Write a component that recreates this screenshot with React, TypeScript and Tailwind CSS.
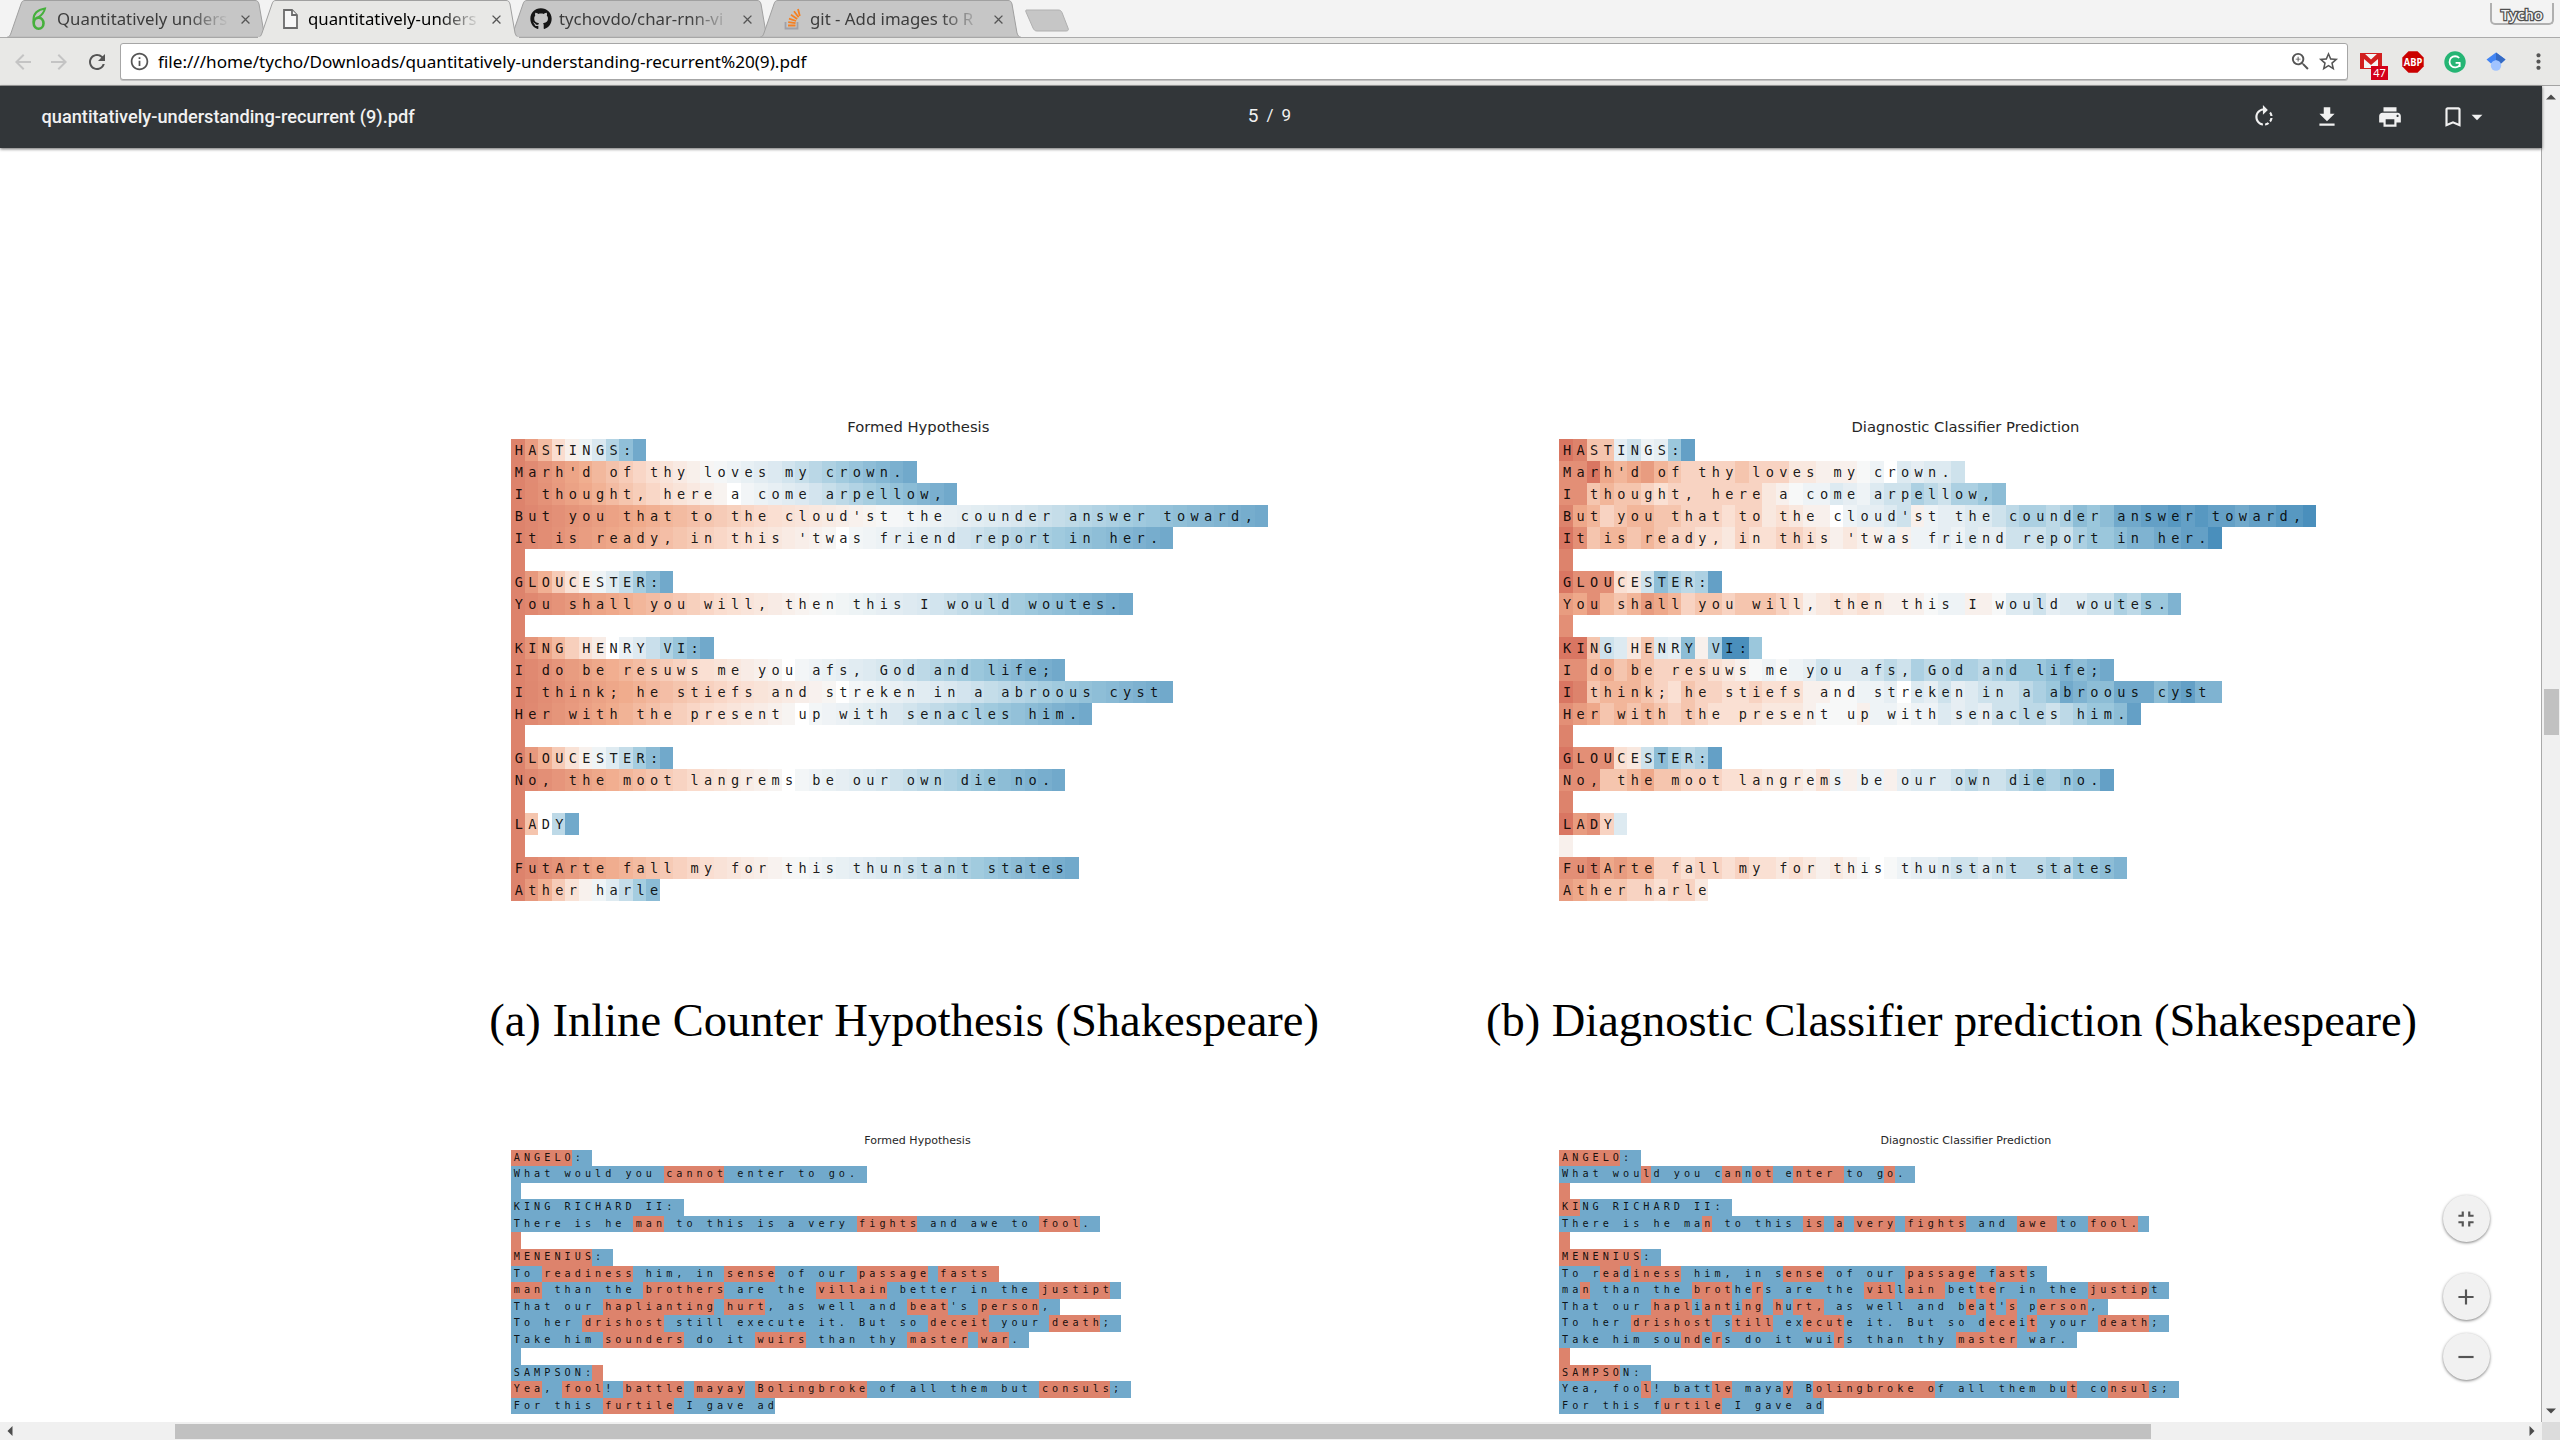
import React from "react";
import {
  MdRotateRight, MdFileDownload, MdPrint, MdBookmarkBorder, MdArrowDropDown, MdFullscreenExit,
  MdAdd, MdRemove, MdZoomIn, MdStarBorder, MdMoreVert, MdInfoOutline, MdRefresh, MdClose,
  MdArrowBack, MdArrowForward,
} from "react-icons/md";
import { FaGithub } from "react-icons/fa";

/* ---------- diverging colour scale ---------- */

const STOPS: [number, number, number][] = [
  [176, 50, 60], [206, 88, 74], [221, 131, 108], [240, 172, 141], [250, 221, 207], [247, 248, 248],
  [218, 232, 240], [160, 202, 222], [113, 169, 203], [70, 140, 186], [40, 90, 150],
];

function scale(v: number): string {
  const p = Math.max(0, Math.min(9.999, v * 10));
  const i = Math.floor(p);
  const f = p - i;
  const c = STOPS[i].map((a, k) => Math.round(a + (STOPS[i + 1][k] - a) * f));
  return `rgb(${c[0]},${c[1]},${c[2]})`;
}

const level = (ch: string) => (ch === "_" ? "#fff" : scale(0.14 + (ch.charCodeAt(0) - 97) * 0.03));

type Row = { text: string; colors: string[] };

/* Every line ends in one extra cell for its newline, except the last one. */
const VERSE = [
  "HASTINGS:", "Marh'd of thy loves my crown.", "I thought, here a come arpellow,",
  "But you that to the cloud'st the counder answer toward,",
  "It is ready, in this 'twas friend report in her.", "", "GLOUCESTER:",
  "You shall you will, then this I would woutes.", "", "KING HENRY VI:",
  "I do be resuws me you afs, God and life;", "I think; he stiefs and streken in a abroous cyst",
  "Her with the present up with senacles him.", "", "GLOUCESTER:",
  "No, the moot langrems be our own die no.", "", "LADY", "",
  "FutArte fall my for this thunstant states", "Ather harle",
];

const counterRows: Row[] = VERSE.map((line, r) => {
  const last = r === VERSE.length - 1;
  const text = last ? line : line + " ";
  const den = line.length;
  return {
    text,
    colors: text.split("").map((_, i) =>
      den && i * 2 === den ? "#fff" : scale(0.2 + 0.6 * (den ? i / den : 0))),
  };
});

const CLASSIFIER = [
  "bchhoqnotx",
  "ddbfgfeghiiiihiiikklllmn_poppq",
  "ddhghhijiiiiiiiklmnnponpqqsrqsstu",
  "cfgihgghhiiijiikjkll_noopqlnooppqrssrsutuwwxxyxyxxwxxyyz",
  "bdhgghghiijjkijjiijklkllnlnnonpooqqqrqsttuvvwwxxz",
  "c",
  "bdddjkqusrsx",
  "efdghgefgihhihhhijlkjkjklllmnnllmppqoppqqsrttv",
  "d",
  "bbhqpkhpoulszzt",
  "ddgfhghiiiijklmnmnoqpppqrqsrrssrstttuvuvwy",
  "bchggghijhiijjijjjllmmnno_poqopqqqrstwvuuwwwuwxvv",
  "defhghghihijjjjkkklmmmlnnmnnpopoqqrrqrsttux",
  "c",
  "bdddjkqusrsx",
  "dddhhgfhhiiijjjkkkljnlnnlopppqrqqrststuux",
  "c",
  "bedip",
  "l",
  "ddcfeffiijiijijjkjklklm_mnoopqqpqrrrsrttuv",
  "efghhiijiik",
];

const classifierRows: Row[] = counterRows.map((row, r) => ({
  text: row.text,
  colors: CLASSIFIER[r].split("").map(level),
}));

/* Binary plots: square brackets enclose the red runs, "~" is the newline cell. */
const RED = "#dd836c";
const BLUE = "#71a9cb";

function marked(src: string): Row {
  let red = false;
  let text = "";
  const colors: string[] = [];
  for (const ch of src) {
    if (ch === "[") red = true;
    else if (ch === "]") red = false;
    else {
      text += ch === "~" ? " " : ch;
      colors.push(red ? RED : BLUE);
    }
  }
  return { text, colors };
}

const nounRows = [
  "[ANGELO]:~", "What would you [cannot] enter to go.~", "~", "KING RICHARD II:~",
  "There is he [man] to this is a very [fights] and awe to [fool].~", "[~]", "[MENENIUS]:~",
  "To [readiness] him, in [sense] of our [passage] [fasts~]",
  "[man] than the [brothers] are the [villain] better in the [justipt]~",
  "That our [haplianting] [hurt], as well and [beat]'s [person],~",
  "To her [drishost] still execute it. But so [deceit] your [death];~",
  "Take him [sounders] do it [wuirs] than thy [master] [war].~", "~", "SAMPSON:[~]",
  "[Yea], [fool]! [battle] [mayay] [Bolingbroke] of all them but [consuls];~",
  "For this [furtile] I gave ad",
].map(marked);

const nounPredictedRows = [
  "[ANGELO]:~", "What wou[l]d you c[an]n[ot] e[nter ]to g[o].~", "[~]", "[KI]NG RICHARD II:~",
  "There is he ma[n] to this [is] [a] [very] [fights] and [awe ]to [fool.]~", "[~]", "[MENENIUS]:~",
  "To r[ea]d[iness] him, in s[ense] of our [passage] f[ast]s~",
  "ma[n] than the [brot]he[r]s are the [vil]l[ain ]bet[te]r in the [justip]t~",
  "That our [hapl]i[ant]i[ng] [h]u[rt,] as well and b[e]a[t]'[s] p[erson],~",
  "To her [drishost] s[till] ex[ecut]e it. But so d[ece]i[t] your [death];~",
  "Take him sou[nd]e[r]s do it wui[r]s than thy [master] war.~", "[~]", "[SAMPSO]N:~",
  "Yea, foo[l]! batt[le] maya[y] B[olingbroke o]f all them bu[t] co[nsul]s;~",
  "For this f[urtile] I gave ad",
].map(marked);

/* ---------- plots ---------- */

function Plot({ rows, small }: { rows: Row[]; small?: boolean }) {
  const rowCls = small
    ? "flex h-[16.56px] text-[10.2px] leading-[16.4px]"
    : "flex h-[22.03px] text-[13.6px] leading-[23px]";
  const cellCls = small
    ? "block w-[10.157px] shrink-0 whitespace-pre pl-[2.6px] text-black/90"
    : "block w-[13.53px] shrink-0 whitespace-pre pl-[3.6px] text-black/90";
  return (
    <div className="font-['DejaVu_Sans_Mono',monospace]">
      {rows.map((row, r) => (
        <div key={r} className={rowCls}>
          {row.text.split("").map((ch, i) => (
            <span key={i} className={cellCls} style={{ backgroundColor: row.colors[i] }}>{ch}</span>
          ))}
        </div>
      ))}
    </div>
  );
}

/* ---------- browser chrome ---------- */

function Tab({ title, icon, active, first }: { title: string; icon: React.ReactNode; active?: boolean; first?: boolean }) {
  return (
    <div className={`relative h-[38px] w-[261px] shrink-0 ${first ? "" : "-ml-[10px]"} ${active ? "z-10" : ""}`}>
      <svg className="absolute inset-0" width="261" height="38" viewBox="0 0 261 38">
        <path d="M0 37.5 C2 37 3 36 4 33 L14 4 C15 1 16 .5 18 .5 H248 C250 .5 251 1 252 4 L257 33 C258 36 259 37 261 37.5"
          fill={active ? "#e8e8e6" : "#c6c6c6"} stroke="#a0a0a0" strokeWidth="1" />
        <path d="M0 37.5H261" stroke={active ? "#e8e8e6" : "#a7a7a7"} strokeWidth="1.5" />
      </svg>
      <div className="relative flex h-[38px] items-center pl-[21px]">
        <div className="flex w-[22px] justify-center">{icon}</div>
        <div className={`ml-[7px] w-[176px] whitespace-nowrap text-[16.8px] [mask-image:linear-gradient(to_right,black_74%,transparent_98%)] ${active ? "text-black" : "text-[#3c3c3c]"}`}>{title}</div>
        <MdClose className="ml-[5px] text-[#555]" size={15} />
      </div>
    </div>
  );
}

const OverleafMark = () => (
  <svg width="16" height="24" viewBox="0 0 16 24" fill="none" stroke="#46b03c" strokeWidth="2.6">
    <ellipse cx="7.6" cy="16.2" rx="4.9" ry="5.6" />
    <path d="M2.7 15.500C1.500 8 5 3 14 1.500C12.500 8 9 9 5.500 11.500" strokeWidth="2" />
  </svg>
);

const PageMark = () => (
  <svg width="15" height="20" viewBox="0 0 15 20" fill="#f7f7f7" stroke="#6b6b6b" strokeWidth="1.8">
    <path d="M1 1H9L14 6V19H1Z" /><path d="M9 1V6H14" />
  </svg>
);

const StackMark = () => (
  <svg width="17" height="22" viewBox="0 0 17 22" fill="none" strokeWidth="1.8">
    <path d="M1.5 14V20.5H13.5V14" stroke="#a0a0a8" />
    <path d="M4 17.5H11.5M4.2 14.2L11.6 15.2M5 10.6L12.1 13M7 6.8L13.2 11M10 3.2L14.6 9.2M14 1L15.8 8" stroke="#f48024" />
  </svg>
);

const GmailMark = () => (
  <div className="relative h-[18px] w-[22px]">
    <svg width="22" height="18" viewBox="0 0 22 18">
      <rect x=".5" y=".5" width="21" height="15" fill="#f4f4f4" stroke="#d21f1f" />
      <path d="M0 0H4L11 6.5L18 0H22V16H18V6L11 12L4 6V16H0Z" fill="#d21f1f" />
    </svg>
    <span className="absolute left-[11px] top-[13px] h-[14px] w-[17px] bg-[#d4001a] text-center text-[11px] leading-[14px] text-white">47</span>
  </div>
);

const AbpMark = () => (
  <svg width="22" height="22" viewBox="0 0 22 22">
    <path d="M6.5 .3H15.5L21.700 6.500V15.500L15.500 21.700H6.500L.3 15.500V6.500Z" fill="#cb0000" />
    <text x="11" y="14.700" textAnchor="middle" textLength="18.500" lengthAdjust="spacingAndGlyphs" className="fill-white font-['Open_Sans',sans-serif] text-[10.500px] font-bold">ABP</text>
  </svg>
);

const GrammarlyMark = () => (
  <svg width="22" height="22" viewBox="0 0 22 22" fill="none">
    <circle cx="11" cy="11" r="10.7" fill="#25b574" />
    <path d="M15.2 7A5.6 5.6 0 1 0 15.6 14.2V11.8H11.6M15.7 11.9V16" stroke="#fff" strokeWidth="1.8" />
  </svg>
);

const ScholarMark = () => (
  <svg width="20" height="20" viewBox="0 0 20 20">
    <path d="M10 .5L19.5 7.5L15 11.5L10 8.5L5 11.5L.5 7.5Z" fill="#4285f4" />
    <path d="M10 .5L19.5 7.5L14.5 12L10 8Z" fill="#356ac3" />
    <circle cx="10" cy="13.500" r="5.200" fill="#a0c3ff" />
  </svg>
);

const Triangle = ({ dir }: { dir: "up" | "down" | "left" | "right" }) => (
  <svg width="10" height="10" viewBox="0 0 10 10" fill="#4c4c4c">
    {dir === "up" && <path d="M0 7.5L5 2.5L10 7.5Z" />}
    {dir === "down" && <path d="M0 2.5L5 7.5L10 2.5Z" />}
    {dir === "left" && <path d="M7.5 0L2.5 5L7.5 10Z" />}
    {dir === "right" && <path d="M2.5 0L7.5 5L2.5 10Z" />}
  </svg>
);

const fab =
  "flex h-[47px] w-[47px] items-center justify-center rounded-full bg-[#f1f1f1] text-[#555] shadow-[0_1px_3px_rgba(0,0,0,0.5)]";

export default function App() {
  return (
    <div className="flex h-[1440px] w-[2560px] flex-col overflow-hidden bg-white font-['Noto_Sans',sans-serif]">
      {/* tab strip */}
      <div className="flex h-[38px] shrink-0 border-b border-[#ababab] bg-[#f3f3f3] pl-[7px]">
        <Tab first title="Quantitatively unders" icon={<OverleafMark />} />
        <Tab active title="quantitatively-unders" icon={<PageMark />} />
        <Tab title="tychovdo/char-rnn-vi" icon={<FaGithub size={22} color="#161616" />} />
        <Tab title="git - Add images to R" icon={<StackMark />} />
        <svg className="ml-[3px] mt-[9px]" width="46" height="23" viewBox="0 0 46 23">
          <path d="M3 1H34C36 1 37 1.500 38 3.500L44 19C45 21 44 22 42 22H13C11 22 10 21 9 19L2 3C1.500 1.500 1.500 1 3 1Z" fill="#c6c6c6" stroke="#b0b0b0" />
        </svg>
        <div className="ml-auto mr-[6px] mt-[3px] flex h-[22px] w-[64px] items-center justify-center rounded-b-[5px] border-2 border-t-0 border-[#b0b0b0] pt-[3px] text-[15px] font-medium text-[#f3f3f3] [paint-order:stroke_fill] [-webkit-text-stroke:2.500px_#505050]">Tycho</div>
      </div>

      {/* address bar */}
      <div className="flex h-[48px] shrink-0 items-center border-b border-[#a3a3a3] bg-[#e8e8e6] text-[#555]">
        <MdArrowBack className="ml-[11px] text-[#c4c4c4]" size={24} />
        <MdArrowForward className="ml-[12px] text-[#c4c4c4]" size={24} />
        <MdRefresh className="ml-[14px]" size={24} />
        <div className="ml-[11px] flex h-[37px] w-[2228px] items-center rounded-[3px] border border-[#a6a6a6] bg-white shadow-[0_1px_0_#c0c0c0]">
          <MdInfoOutline className="ml-[8px]" size={21} />
          <span className="ml-[8px] text-[17.140px] text-black">file:///home/tycho/Downloads/quantitatively-understanding-recurrent%20(9).pdf</span>
          <MdZoomIn className="ml-auto" size={23} />
          <MdStarBorder className="ml-[5px] mr-[7px]" size={23} />
        </div>
        <div className="ml-[12px] flex items-center gap-[20px]">
          <GmailMark />
          <AbpMark />
          <GrammarlyMark />
          <ScholarMark />
        </div>
        <MdMoreVert className="ml-[20px]" size={25} />
      </div>

      <div className="flex min-h-0 flex-1">
        <div className="relative flex min-w-0 flex-1 flex-col">
          {/* viewer toolbar */}
          <div className="z-10 grid h-[62px] shrink-0 grid-cols-3 items-center bg-[#323639] font-['Roboto',sans-serif] text-[#f1f1f1] shadow-[0_1px_3px_rgba(0,0,0,0.6)]">
            <div className="whitespace-nowrap pl-[41.500px] text-[18.200px] font-medium">quantitatively-understanding-recurrent (9).pdf</div>
            <div className="-ml-[3px] flex items-center justify-center pb-[2px] text-[17px]">
              <span className="text-[19px]">5</span>
              <span className="ml-[8px]">/</span>
              <span className="ml-[8px]">9</span>
            </div>
            <div className="flex items-center justify-end pr-[52px]">
              <MdRotateRight size={26} />
              <MdFileDownload className="ml-[37px]" size={26} />
              <MdPrint className="ml-[37px]" size={26} />
              <MdBookmarkBorder className="ml-[37px]" size={26} />
              <MdArrowDropDown className="-ml-[2px]" size={26} />
            </div>
          </div>

          {/* document page */}
          <div className="flex flex-1 pl-[511.200px]">
            <section className="w-[1048.300px] shrink-0 pt-[268px]">
              <h2 className="ml-[336px] h-[23px] whitespace-nowrap font-['DejaVu_Sans',sans-serif] text-[14.750px] leading-[21px] text-[#262626]">Formed Hypothesis</h2>
              <Plot rows={counterRows} />
              <p className="-ml-[22px] mt-[89.400px] h-[60px] whitespace-nowrap font-['Liberation_Serif',serif] text-[46.550px] leading-[60px] text-black">(a) Inline Counter Hypothesis (Shakespeare)</p>
              <h2 className="ml-[353px] mt-[81px] h-[18px] whitespace-nowrap font-['DejaVu_Sans',sans-serif] text-[11.050px] leading-[17px] text-[#262626]">Formed Hypothesis</h2>
              <Plot small rows={nounRows} />
            </section>
            <section className="shrink-0 pt-[268px]">
              <h2 className="ml-[292px] h-[23px] whitespace-nowrap font-['DejaVu_Sans',sans-serif] text-[14.750px] leading-[21px] text-[#262626]">Diagnostic Classifier Prediction</h2>
              <Plot rows={classifierRows} />
              <p className="-ml-[73.500px] mt-[89.400px] h-[60px] whitespace-nowrap font-['Liberation_Serif',serif] text-[46.450px] leading-[60px] text-black">(b) Diagnostic Classifier prediction (Shakespeare)</p>
              <h2 className="ml-[321px] mt-[81px] h-[18px] whitespace-nowrap font-['DejaVu_Sans',sans-serif] text-[11.050px] leading-[17px] text-[#262626]">Diagnostic Classifier Prediction</h2>
              <Plot small rows={nounPredictedRows} />
            </section>
          </div>

          {/* zoom buttons */}
          <div className="absolute bottom-[60px] right-[52.500px] flex flex-col">
            <div className={fab}><MdFullscreenExit size={26} /></div>
            <div className={`${fab} mt-[31px]`}><MdAdd size={26} /></div>
            <div className={`${fab} mt-[13px]`}><MdRemove size={26} /></div>
          </div>

          {/* horizontal scrollbar */}
          <div className="z-10 flex h-[18px] shrink-0 items-center justify-between bg-[#f0f0f0] px-[5px]">
            <Triangle dir="left" />
            <div className="ml-[160px] mr-auto h-[15px] w-[1976px] bg-[#c1c1c1]" />
            <Triangle dir="right" />
          </div>
        </div>

        {/* vertical scrollbar */}
        <div className="flex w-[18px] shrink-0 flex-col">
          <div className="flex flex-1 flex-col items-center justify-between bg-[#f0f0f0] py-[6px] shadow-[-1px_0_0_#a9a9a9]">
            <Triangle dir="up" />
            <div className="mb-auto mt-[587px] h-[46px] w-[15px] bg-[#c1c1c1]" />
            <Triangle dir="down" />
          </div>
          <div className="h-[18px] bg-[#dcdcdc]" />
        </div>
      </div>
    </div>
  );
}
